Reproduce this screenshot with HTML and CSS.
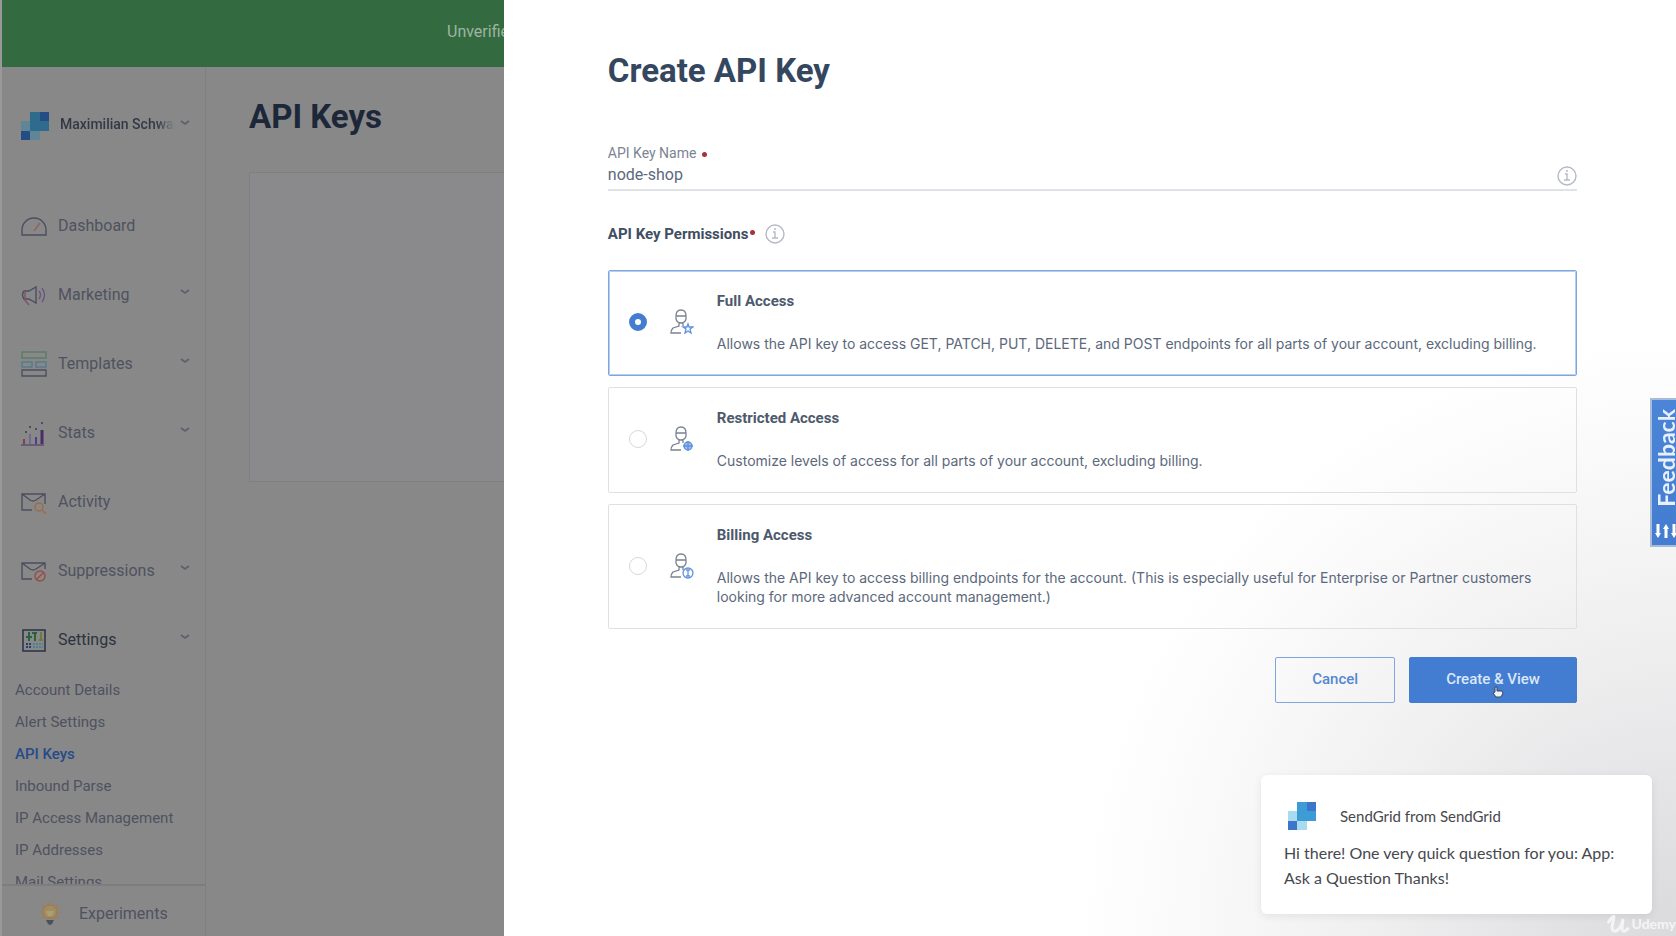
FILE: index.html
```html
<!DOCTYPE html>
<html lang="en">
<head>
<meta charset="utf-8">
<meta name="viewport" content="width=device-width, initial-scale=1">
<title>API Keys</title>
<link rel="stylesheet" href="styles.css">
</head>
<body>
<div class="app">
  <div class="backdrop">
    <div class="banner">Unverified</div>
    <div class="workspace">
      <aside class="sidebar">
        <button class="account" type="button">
          <svg class="logo" viewBox="0 0 28 28"><path fill="#5f8596" d="M0 9h9v10H0zM9 19h10v9H9z"/><path fill="#2f6b8d" d="M9 0h19v19H9z"/><path fill="#234d84" d="M19 0h9v9h-9zM0 19h9v9H0z"/></svg>
          <span class="account-name">Maximilian Schwarz</span>
          <svg class="chevron" viewBox="0 0 10 6"><path d="M1 1l4 3 4-3"/></svg>
        </button>
        <nav class="nav">
          <a class="nav-item" href="#"><svg class="nav-icon" viewBox="0 0 26 26"><path d="M1 22v-5a12 12 0 0 1 24 0v5z"/><path stroke="#8f6262" d="M13 18l6-8"/></svg><span>Dashboard</span></a>
          <a class="nav-item" href="#"><svg class="nav-icon" viewBox="0 0 26 26"><path d="M3 9h5l7-4v16l-7-4H3q-3-4 0-8z"/><path stroke="#855060" d="M3 17l5 6M4 9v8"/><path stroke="#6d5582" d="M18 9q3 4 0 8M21 6q5 7 0 14"/></svg><span>Marketing</span><svg class="chevron" viewBox="0 0 10 6"><path d="M1 1l4 3 4-3"/></svg></a>
          <a class="nav-item" href="#"><svg class="nav-icon" viewBox="0 0 26 26"><path stroke="#5b7d67" d="M1 1h24v6H1z"/><path stroke="#547b8b" d="M1 11h10v5H1zM15 11h10v5H15z"/><path d="M1 19h24v6H1z"/></svg><span>Templates</span><svg class="chevron" viewBox="0 0 10 6"><path d="M1 1l4 3 4-3"/></svg></a>
          <a class="nav-item" href="#"><svg class="nav-icon" viewBox="0 0 26 26"><path stroke="#813d58" stroke-width="2" d="M3 19v5"/><path stroke="#746a8d" stroke-width="2" d="M9 14v10"/><path stroke="#4f3b91" stroke-width="2" d="M15 17v7"/><path stroke="#4b2d63" stroke-width="3" d="M21 10v14"/><path stroke="#5d4d74" stroke-width="1.5" d="M0 25h23"/><path stroke-width="2" d="M4 12h2M8 7h2M14 9h2M20 3h2"/></svg><span>Stats</span><svg class="chevron" viewBox="0 0 10 6"><path d="M1 1l4 3 4-3"/></svg></a>
          <a class="nav-item" href="#"><svg class="nav-icon" viewBox="0 0 26 26"><path d="M11 21H1V5h23v10M1 5l8 6q3 2 6 0l9-6"/><circle stroke="#9c6d44" cx="18" cy="18" r="4"/><path stroke="#9c6d44" d="M21 21l4 4"/></svg><span>Activity</span></a>
          <a class="nav-item" href="#"><svg class="nav-icon" viewBox="0 0 26 26"><path d="M11 21H1V5h23v6M1 5l8 6q3 2 6 0l9-6"/><g stroke="#984d43"><circle cx="19" cy="18" r="5"/><path d="M15 22l8-8"/></g></svg><span>Suppressions</span><svg class="chevron" viewBox="0 0 10 6"><path d="M1 1l4 3 4-3"/></svg></a>
          <a class="nav-item nav-item-open" href="#"><svg class="nav-icon" viewBox="0 0 26 26"><path stroke="#293143" stroke-width="1.5" d="M2 3h22v21H2z"/><path stroke="#26633b" stroke-width="2" d="M8 5v9M5 10h6M14 5v9M11 6h5"/><path stroke="#6d7b3a" stroke-width="2" d="M20 5v9M18 13h4"/><path stroke="#263d70" stroke-width="2" stroke-dasharray="2 1" d="M5 17h5M5 20h5"/><path stroke="#4e8193" stroke-width="2" stroke-dasharray="2 1" d="M12 17h10M12 20h10"/></svg><span>Settings</span><svg class="chevron" viewBox="0 0 10 6"><path d="M1 1l4 3 4-3"/></svg></a>
          <ul class="subnav">
            <li><a href="#">Account Details</a></li>
            <li><a href="#">Alert Settings</a></li>
            <li><a class="current" href="#">API Keys</a></li>
            <li><a href="#">Inbound Parse</a></li>
            <li><a href="#">IP Access Management</a></li>
            <li><a href="#">IP Addresses</a></li>
            <li><a href="#">Mail Settings</a></li>
          </ul>
        </nav>
        <a class="experiments" href="#"><svg class="bulb" viewBox="0 0 22 24"><g fill="none" stroke="#a37c50" stroke-width="1.5"><path fill="#a18d61" d="M7 16q-3-3-3-6a7 7 0 0 1 14 0q0 3-3 6z"/><path d="M11 0v2M3 3l2 2M19 3l-2 2M0 10h2M20 10h2M2 16l2-1M20 16l-2-1"/></g><path fill="#a9a173" d="M7 9h8l-2 5H9z"/><path fill="#4c4f5d" d="M7 18h8l-2 4-2 1-2-1z"/></svg><span>Experiments</span></a>
      </aside>
      <main class="main">
        <h1 class="page-title">API Keys</h1>
        <div class="empty-box"></div>
      </main>
    </div>
  </div>

  <section class="panel" role="dialog" aria-labelledby="dialog-title">
    <h2 class="panel-title" id="dialog-title">Create API Key</h2>
    <form class="form">
      <div class="field">
        <label class="field-label" for="key-name">API Key Name <i class="required"></i></label>
        <div class="field-row">
          <input class="field-input" id="key-name" type="text" value="node-shop">
          <button class="info" type="button" aria-label="About the key name"><svg viewBox="0 0 20 20"><circle cx="10" cy="10" r="9"/><path d="M8 8h2v6M7 14h6M9 5h2"/></svg></button>
        </div>
      </div>
      <fieldset class="permissions">
        <legend class="legend">API Key Permissions<i class="required required-high"></i><button class="info" type="button" aria-label="About permissions"><svg viewBox="0 0 20 20"><circle cx="10" cy="10" r="9"/><path d="M8 8h2v6M7 14h6M9 5h2"/></svg></button></legend>
        <div class="options">
          <label class="option option-selected">
            <input class="radio" type="radio" name="access" checked>
            <svg class="person" viewBox="0 0 24 26"><path d="M6 7q0-6 5-6t5 6v3q-1 4-5 4t-5-4zM6 7h10M9 14v3l-6 2q-2 2-2 5h10M13 14v3"/><path class="mark" d="M18 15l1 3h4l-3 2 1 4-3-2-3 2 1-4-3-2h4z"/></svg>
            <span class="option-text"><strong class="option-title">Full Access</strong><span class="option-desc">Allows the API key to access GET, PATCH, PUT, DELETE, and POST endpoints for all parts of your account, excluding billing.</span></span>
          </label>
          <label class="option">
            <input class="radio" type="radio" name="access">
            <svg class="person" viewBox="0 0 24 26"><path d="M6 7q0-6 5-6t5 6v3q-1 4-5 4t-5-4zM6 7h10M9 14v3l-6 2q-2 2-2 5h10M13 14v3"/><circle class="mark" fill="#9dbce9" cx="18" cy="20" r="4"/><path class="mark" d="M18 15v10M13 20h10"/></svg>
            <span class="option-text"><strong class="option-title">Restricted Access</strong><span class="option-desc">Customize levels of access for all parts of your account, excluding billing.</span></span>
          </label>
          <label class="option">
            <input class="radio" type="radio" name="access">
            <svg class="person" viewBox="0 0 24 26"><path d="M6 7q0-6 5-6t5 6v3q-1 4-5 4t-5-4zM6 7h10M9 14v3l-6 2q-2 2-2 5h10M13 14v3"/><circle class="mark" cx="18" cy="20" r="5"/><path class="mark" d="M18 17v6M16 17h4M16 23h4"/></svg>
            <span class="option-text"><strong class="option-title">Billing Access</strong><span class="option-desc">Allows the API key to access billing endpoints for the account. (This is especially useful for Enterprise or Partner customers looking for more advanced account management.)</span></span>
          </label>
        </div>
      </fieldset>
      <div class="actions">
        <button class="button" type="button">Cancel</button>
        <button class="button button-primary" type="button">Create &amp; View
          <svg class="pointer" viewBox="0 0 12 12"><path fill="#eef2f8" stroke="#3a4556" d="M3 6V1h2v4h5l1 2-2 4H4L1 7z"/></svg>
        </button>
      </div>
    </form>
  </section>

  <button class="feedback" type="button">
    <span class="feedback-text">Feedback</span>
    <svg class="feedback-icon" viewBox="0 0 24 16"><path stroke="#fff" stroke-width="3" fill="none" d="M4 1v10M12 5v10M20 1v10"/><path fill="#fff" d="M1 10h6l-3 5zM9 6h6l-3-5zM17 10h6l-3 5z"/></svg>
  </button>

  <aside class="chat">
    <div class="chat-head">
      <svg class="logo" viewBox="0 0 28 28"><path fill="#a9dbf0" d="M0 9h9v10H0zM9 19h10v9H9z"/><path fill="#3d9bd6" d="M9 0h19v19H9z"/><path fill="#3c75c9" d="M19 0h9v9h-9zM0 19h9v9H0z"/></svg>
      <span>SendGrid from SendGrid</span>
    </div>
    <p class="chat-body">Hi there! One very quick question for you: App: Ask a Question Thanks!</p>
  </aside>
  <div class="watermark"><svg viewBox="0 0 24 20"><path d="M2 9q5-8 6-6l-2 10q0 5 4 4 5-2 7-12l-1 9q0 4 3 3l4-3"/></svg><span>Udemy</span></div>
</div>
</body>
</html>
```
FILE: styles.css
```css
* { box-sizing: border-box; }

body {
  margin: 0;
  font-family: Roboto, "Liberation Sans", sans-serif;
  font-size: 16px;
  line-height: 20px;
  color: #5c687b;
  background: #fff;
  overflow: hidden;
}

a { color: inherit; text-decoration: none; }
button, input { font: inherit; color: inherit; margin: 0; }
button { cursor: pointer; }

.app { display: flex; height: 100vh; }

/* Dimmed page behind the dialog */
.backdrop {
  flex: 0 0 calc(30% + 1px);
  min-width: 0;
  display: flex;
  flex-direction: column;
  overflow: hidden;
  background: #888;
  box-shadow: inset 2px 0 #999;
  color: #4f5260;
}

.banner {
  flex: none;
  padding: 22px 0 25px 445px;
  margin-left: 2px;
  background: #346a3f;
  color: #9db5a2;
  white-space: nowrap;
}

.workspace { flex: 1; min-height: 0; display: flex; }

.sidebar {
  flex: none;
  width: 206px;
  display: flex;
  flex-direction: column;
  border-right: 1px solid #808080;
}

.logo { flex: none; width: 28px; height: 28px; }

.account {
  display: flex;
  align-items: center;
  margin: 45px 0 51px;
  padding: 0 15px 0 21px;
  border: 0;
  background: none;
  font-size: 14px;
  font-weight: 500;
  color: #323846;
}

.account-name {
  flex: 1;
  min-width: 0;
  margin: 0 5px 4px 11px;
  overflow: hidden;
  white-space: nowrap;
  text-align: left;
  -webkit-mask-image: linear-gradient(to right, #000 84%, transparent);
  mask-image: linear-gradient(to right, #000 84%, transparent);
}

.chevron {
  flex: none;
  width: 10px;
  height: 6px;
  margin: 0 0 6px auto;
  fill: none;
  stroke: #5c606a;
  stroke-width: 1.6;
}

.nav { flex: 1; min-height: 0; overflow: hidden; }

.nav-item {
  display: flex;
  align-items: center;
  height: 69px;
  padding: 0 15px 0 21px;
  gap: 11px;
}

.nav-item-open { color: #2c323f; }

.nav-icon { width: 26px; height: 26px; fill: none; stroke: #4b4e60; stroke-width: 1.4; }

.subnav { list-style: none; margin: 0; padding: 0 0 0 15px; font-size: 15px; }
.subnav a { display: block; line-height: 32px; }
.subnav .current { color: #264b8a; font-weight: 500; }

.experiments {
  flex: none;
  display: flex;
  align-items: center;
  height: 52px;
  margin-left: 2px;
  padding: 6px 0 0 37px;
  gap: 18px;
  border-top: 2px solid #7d7d7e;
}

.bulb { width: 22px; height: 24px; }

.main { flex: 1; min-width: 0; padding: 30px 0 0 43px; }

.page-title, .panel-title {
  margin: 0;
  font-size: 33px;
  line-height: 40px;
  font-weight: 700;
}

.page-title { color: #1d273a; white-space: nowrap; }

.empty-box {
  height: 310px;
  margin-top: 35px;
  border: 1px solid #7f7f80;
  border-right: 0;
  background: #8a8a8c;
}

/* Dialog */
.panel {
  flex: 1;
  min-width: 0;
  padding: 51px 99px 0 104px;
  background: radial-gradient(ellipse 600px 600px at bottom right, #dadadd, #efeff0 50%, #fafafb 82%, #fff);
}

.panel-title { color: #34475e; }

.field { margin-top: 52px; border-bottom: 2px solid #dfe2e6; }
.field-label { display: block; font-size: 14px; color: #7a8492; }
.field-row { display: flex; align-items: center; }

.field-input {
  flex: 1;
  min-width: 0;
  height: 26px;
  padding: 0 0 4px;
  border: 0;
  outline: 0;
  background: none;
}

.required {
  display: inline-block;
  width: 5px;
  height: 5px;
  margin-left: 2px;
  border-radius: 50%;
  background: #a83238;
  vertical-align: middle;
}

.info { width: 20px; height: 20px; padding: 0; border: 0; background: none; }
.info svg { display: block; fill: none; stroke: #b6bac4; stroke-width: 1.4; }

.permissions { min-width: 0; margin: 33px 0 0; padding: 0; border: 0; }

.legend {
  display: flex;
  align-items: center;
  padding: 0;
  font-size: 15px;
  font-weight: 700;
  color: #3f4d62;
}

.required-high { margin-bottom: 4px; }
.legend .info { margin-left: 10px; }

.options { display: grid; gap: 11px; margin-top: 26px; }

.option {
  display: flex;
  align-items: center;
  padding: 20px 22px 22px 20px;
  border: 1px solid #dfe0e3;
  border-radius: 2px;
  outline: 1px solid transparent;
}

.option-selected { border-color: #7da5e0; outline-color: #b9cfee; outline-offset: -2px; }

.radio {
  appearance: none;
  flex: none;
  width: 18px;
  height: 18px;
  margin: 0;
  border: 1px solid #d6d8dc;
  border-radius: 50%;
}

.radio:checked { border: 6px solid #447dd0; }

.person {
  flex: none;
  width: 24px;
  height: 26px;
  margin: 0 23px;
  fill: none;
  stroke: #7b8391;
  stroke-width: 1.3;
}

.mark { stroke: #5e92df; }

.option-text { display: grid; gap: 23px; line-height: 19px; }
.option-title { font-size: 15px; line-height: 20px; color: #4d596c; }
.option-desc { font-family: Inter, sans-serif; font-size: 14px; }

.actions { display: flex; justify-content: flex-end; gap: 14px; margin-top: 28px; }

.button {
  position: relative;
  height: 46px;
  padding: 0 36px 2px;
  border: 1px solid #7fa6e0;
  border-radius: 2px;
  background: none;
  font-size: 15px;
  font-weight: 500;
  color: #5488d2;
}

.button-primary { background: #427dd1; border-color: #427dd1; color: #dbe7f8; }

.pointer { position: absolute; left: 82px; bottom: 4px; width: 12px; height: 12px; }

/* Floating items */
.feedback {
  position: absolute;
  top: 398px;
  right: -6px;
  display: flex;
  flex-direction: column;
  align-items: center;
  width: 32px;
  height: 149px;
  padding: 9px 0 0;
  border: 2px solid #a8bbd8;
  background: linear-gradient(#4a85d8, #447dd0);
  color: #e8f0fb;
}

.feedback-text {
  writing-mode: vertical-rl;
  transform: rotate(180deg);
  font-family: Lato, sans-serif;
  font-size: 23px;
  font-weight: 700;
  line-height: 26px;
}

.feedback-icon { width: 24px; height: 16px; margin-top: 16px; }

.chat {
  position: absolute;
  right: 24px;
  bottom: 22px;
  width: 391px;
  padding: 27px 25px 24px 23px;
  border-radius: 6px;
  background: #fff;
  box-shadow: 0 2px 8px rgba(0, 0, 0, .08);
  font-family: Lato, sans-serif;
  line-height: 25px;
  color: #46484d;
}

.chat-head { display: flex; align-items: center; gap: 24px; padding-left: 4px; font-size: 15px; }
.chat-body { margin: 10px 0 0; }

.watermark {
  position: absolute;
  right: 0;
  bottom: 2px;
  display: flex;
  align-items: center;
  gap: 2px;
  font-family: Lato, sans-serif;
  font-size: 14px;
  font-weight: 700;
  color: #f4f4f6;
}

.watermark svg { width: 24px; height: 20px; fill: none; stroke: #f4f4f6; stroke-width: 3; }
```
